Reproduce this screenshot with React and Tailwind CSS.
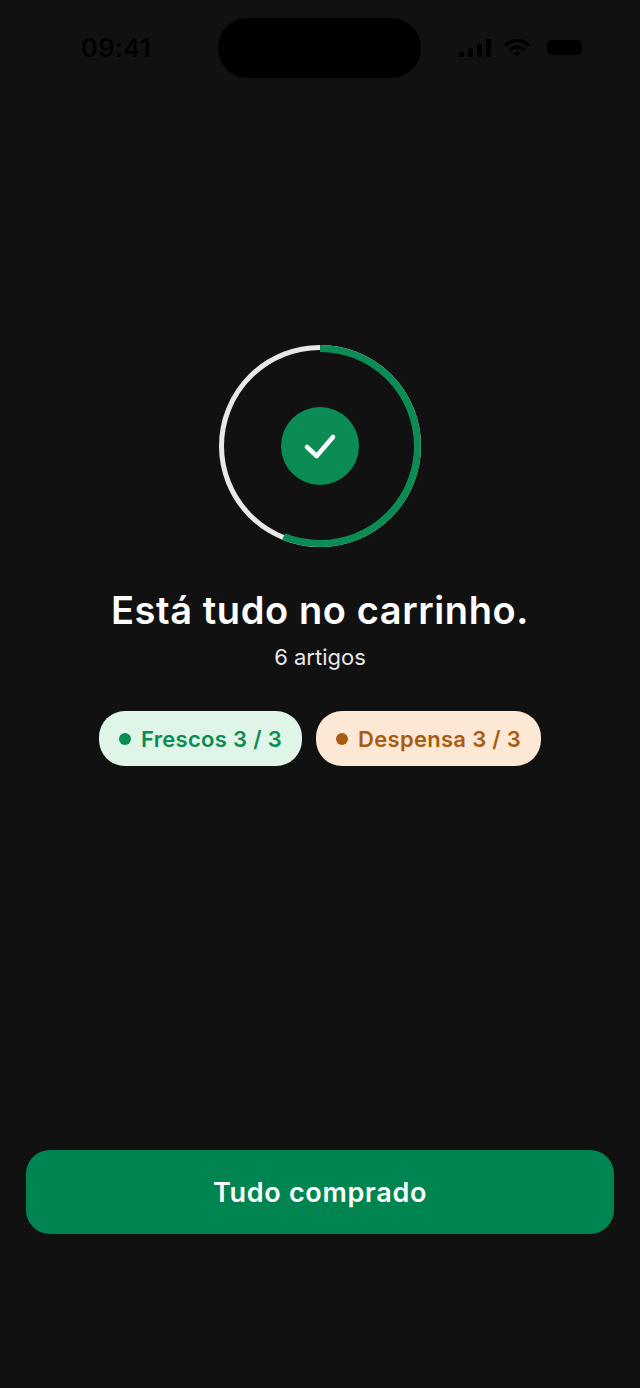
import React from "react";

const RING_R = 97.5;
const RING_C = 2 * Math.PI * RING_R;
const DONE = 0.56;

function StatusBar() {
  return (
    <div className="flex items-center h-[60px] mt-[18px] pl-[81px]">
      <span className="w-[137px] text-[26px] leading-none font-medium text-[#000] tracking-[0.4px]">09:41</span>
      <div className="w-[203px] h-[60px] rounded-full bg-black" />
      <div className="flex items-center gap-[11px] mt-[-1px] ml-[38px]">
        <svg width="33" height="20" viewBox="0 0 33 20" fill="#000">
          <rect x="0" y="14" width="5" height="5" rx="1.5" />
          <rect x="9" y="10.5" width="5" height="8.5" rx="1.5" />
          <rect x="18" y="6" width="5" height="13" rx="1.5" />
          <rect x="27" y="1" width="5" height="18" rx="1.5" />
        </svg>
        <svg width="28" height="20" viewBox="0 0 28 20" fill="none" stroke="#000" strokeWidth="3.2">
          <path d="M2 7.5a17 17 0 0 1 24 0" />
          <path d="M6.5 12a11 11 0 0 1 15 0" />
          <path d="M14 19l-3.6-3.8a5 5 0 0 1 7.2 0z" fill="#000" stroke="none" />
        </svg>
        <div className="w-[35px] h-[15px] ml-[5px] rounded-[5px] bg-black" />
      </div>
    </div>
  );
}

function ProgressRing() {
  return (
    <div className="relative w-[202px] h-[202px] flex items-center justify-center">
      <svg className="absolute inset-0" width="202" height="202" viewBox="0 0 202 202" fill="none">
        <circle cx="101" cy="101" r="98.5" stroke="#e8e8e8" strokeWidth="5" />
        <circle
          cx="101"
          cy="101"
          r={RING_R}
          stroke="#0a8c54"
          strokeWidth="7"
          strokeDasharray={`${RING_C * DONE} ${RING_C}`}
          transform="rotate(-90 101 101)"
        />
      </svg>
      <div className="w-[78px] h-[78px] rounded-full bg-[#0a8c54] flex items-center justify-center">
        <svg width="34" height="34" viewBox="0 0 34 34" fill="none" stroke="#fff" strokeWidth="4.6" strokeLinecap="round" strokeLinejoin="round">
          <path d="M4 18l9.7 9L30 8" />
        </svg>
      </div>
    </div>
  );
}

function Pill({ label, bg, color, width }) {
  return (
    <div className={`flex items-center h-[55px] rounded-[26px] pl-[20px] gap-[10px] ${bg} ${color} ${width}`}>
      <span className="w-[12px] h-[12px] rounded-full bg-current" />
      <span className="text-[22px] font-semibold leading-none tracking-[0.3px]">{label}</span>
    </div>
  );
}

export default function App() {
  return (
    <div className="w-[640px] h-[1388px] bg-[#111111] flex flex-col font-['Inter',sans-serif]">
      <StatusBar />
      <div className="flex flex-col items-center mt-[267px]">
        <ProgressRing />
        <h1 className="mt-[39px] text-[38px] leading-[48px] font-semibold text-white tracking-[0.6px]">Está tudo no carrinho.</h1>
        <p className="mt-[9px] text-[22px] leading-[28px] text-[#e8e8e8]">6 artigos</p>
        <div className="flex gap-[14px] mt-[40px]">
          <Pill label="Frescos 3 / 3" bg="bg-[#dff5e8]" color="text-[#0a8c54]" width="w-[203px]" />
          <Pill label="Despensa 3 / 3" bg="bg-[#fde8d6]" color="text-[#a85c10]" width="w-[225px]" />
        </div>
      </div>
      <button className="mt-[384px] mx-[26px] h-[84px] pt-[3px] rounded-[24px] bg-[#008550] text-white text-[27px] font-semibold tracking-[0.7px]">
        Tudo comprado
      </button>
    </div>
  );
}
